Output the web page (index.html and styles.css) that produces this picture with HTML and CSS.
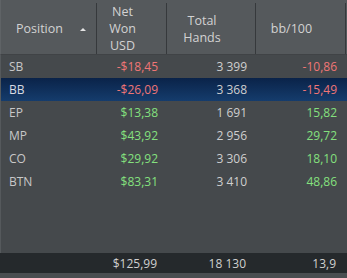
FILE: index.html
```html
<!DOCTYPE html>
<html>
<head>
<meta charset="utf-8">
<link rel="stylesheet" href="styles.css">
</head>
<body>
<div class="grid">
  <div class="head">
    <div class="hc"><span>Position</span><span class="sort"></span></div>
    <div class="hc"><span>Net<br>Won<br>USD</span></div>
    <div class="hc"><span>Total<br>Hands</span></div>
    <div class="hc"><span>bb/100</span></div>
  </div>
  <div class="body">
    <div class="row"><div class="c pos">SB</div><div class="c neg">-$18,45</div><div class="c">3 399</div><div class="c neg">-10,86</div></div>
    <div class="row sel"><div class="c pos">BB</div><div class="c neg">-$26,09</div><div class="c">3 368</div><div class="c neg">-15,49</div></div>
    <div class="row"><div class="c pos">EP</div><div class="c posv">$13,38</div><div class="c">1 691</div><div class="c posv">15,82</div></div>
    <div class="row"><div class="c pos">MP</div><div class="c posv">$43,92</div><div class="c">2 956</div><div class="c posv">29,72</div></div>
    <div class="row"><div class="c pos">CO</div><div class="c posv">$29,92</div><div class="c">3 306</div><div class="c posv">18,10</div></div>
    <div class="row"><div class="c pos">BTN</div><div class="c posv">$83,31</div><div class="c">3 410</div><div class="c posv">48,86</div></div>
  </div>
  <div class="foot">
    <div class="c pos"></div><div class="c">$125,99</div><div class="c">18 130</div><div class="c">13,9</div>
  </div>
  <div class="hscroll"></div>
</div>
</body>
</html>
```
FILE: styles.css
```css
* { box-sizing: border-box; }
html, body { margin: 0; padding: 0; }
body {
  width: 347px;
  height: 278px;
  overflow: hidden;
  background: #45494c;
  font-family: "Open Sans", "Noto Sans", sans-serif;
  font-size: 12px;
  color: #cfcfcf;
}
.grid {
  width: 347px;
  height: 278px;
  display: flex;
  flex-direction: column;
}
.head {
  height: 55px;
  flex: none;
  display: grid;
  grid-template-columns: 96px 70px 89px 90px;
  background: #55595c;
  border-bottom: 1px solid #404346;
  border-left: 1px solid #5f6366;
}
.hc {
  margin: 3px 0 3px 0;
  border-right: 1px solid #36393c;
  display: flex;
  align-items: center;
  justify-content: center;
  padding-right: 18px;
  position: relative;
  text-align: center;
  line-height: 17px;
  font-size: 12.5px;
  color: #d2d2d2;
}
.sort {
  position: absolute;
  right: 10px;
  top: 25px;
  width: 0;
  height: 0;
  border-left: 3px solid transparent;
  border-right: 3px solid transparent;
  border-bottom: 3px solid #e4e4e4;
}
.body {
  flex: 1;
  background: #45494c;
  border-left: 1px solid #55595c;
}
.row, .foot {
  display: grid;
  grid-template-columns: 96px 70px 89px 90px;
  height: 23px;
  align-items: center;
}
.row.sel {
  background: linear-gradient(#0a2349, #153c6c);
}
.c {
  text-align: right;
  padding-right: 9px;
  white-space: nowrap;
}
.c.pos {
  text-align: left;
  padding-left: 8px;
  color: #c8c8c8;
}
.sel .c.pos { color: #d8dce2; }
.neg { color: #ef7676; }
.posv { color: #84e07e; }
.foot {
  height: 20px;
  flex: none;
  background: #25292c;
  color: #d0d0d0;
}
.hscroll {
  height: 5px;
  flex: none;
  background: #4a4e51;
}
```
